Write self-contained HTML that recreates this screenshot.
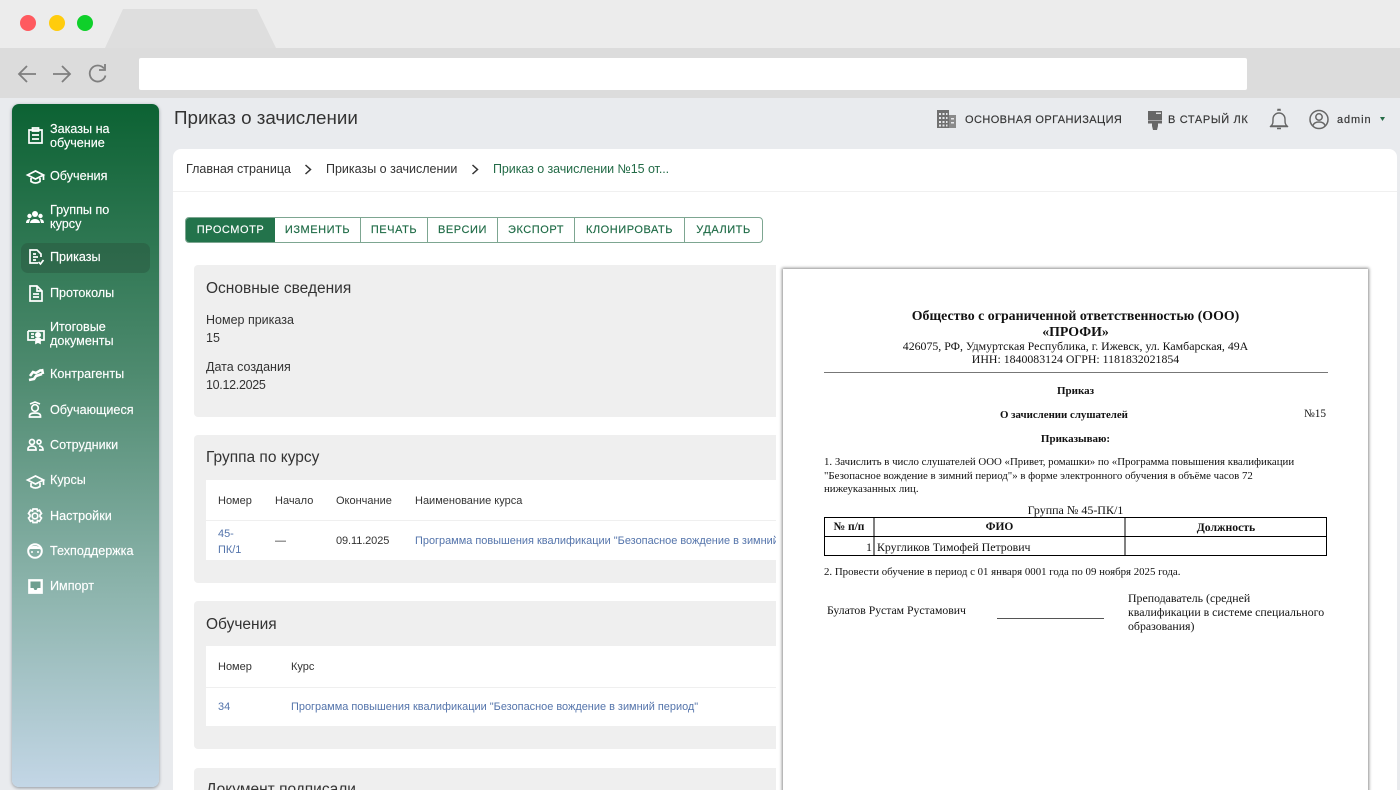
<!DOCTYPE html>
<html lang="ru"><head><meta charset="utf-8"><title>Приказ о зачислении</title>
<style>
html,body{margin:0;padding:0;width:1400px;height:790px;overflow:hidden}
body{position:relative;background:#e9ebee;font-family:"Liberation Sans",sans-serif;color:#2b2b2b}
#root{position:absolute;left:0;top:0;width:1400px;height:790px;overflow:hidden;background:#e9ebee}
.a{position:absolute;white-space:nowrap}
.bar{position:absolute;left:0;top:0;width:1400px;height:48px;background:#ececec}
.bar2{position:absolute;left:0;top:48px;width:1400px;height:50px;background:#dcdcdc}
.side{position:absolute;left:12px;top:104px;width:147px;height:683px;border-radius:7px;background:linear-gradient(180deg,#0c6233 0%,#4f8b70 40%,#8eb5ae 72%,#c3d6e6 100%);box-shadow:0 1px 3px rgba(70,80,90,.55)}
.m{position:absolute;left:50px;color:#fff;font-size:12.6px;line-height:14px;white-space:nowrap;-webkit-text-stroke:.15px #fff}
.main{position:absolute;left:173px;top:149px;width:1224px;height:641px;background:#fff;border-radius:8px 8px 0 0}
.card{position:absolute;left:194px;width:590px;background:#efefef;border-radius:4px}
.h{font-size:15.5px;color:#333}
.t{font-size:11px;color:#333}
.l{font-size:10.95px;color:#5474ab}
.btns{position:absolute;left:185px;top:217px;width:578px;height:26px;display:flex;border:1px solid #7da691;border-radius:4px;overflow:hidden;background:#fff;box-sizing:border-box}
.btns div{box-sizing:border-box;height:24px;line-height:24px;text-align:center;font-size:11px;letter-spacing:.55px;color:#1d6a45;border-right:1px solid #7da691;-webkit-text-stroke:.15px #1d6a45}
.btns div:last-child{border:0}
.btns .on{background:#23734b;color:#fff;border:0;-webkit-text-stroke:.15px #fff}
.doc{font-family:"Liberation Serif",serif;color:#111}
.dc{position:absolute;left:783px;width:585px;text-align:center;white-space:nowrap;font-family:"Liberation Serif",serif;color:#111}
svg{position:absolute;overflow:visible}
</style></head><body><div id="root">
<div class="bar"></div><div class="bar2"></div>
<div class="a" style="left:20px;top:15px;width:16px;height:16px;border-radius:50%;background:#ff5a5f"></div>
<div class="a" style="left:49px;top:15px;width:16px;height:16px;border-radius:50%;background:#ffcc0d"></div>
<div class="a" style="left:77px;top:15px;width:16px;height:16px;border-radius:50%;background:#0fd02a"></div>
<svg style="left:0;top:0" width="300" height="48"><path d="M105 48L123 9H257L276 48Z" fill="#dedede"/></svg>
<svg style="left:0;top:60px" width="120" height="28" fill="none" stroke="#7f7f7f" stroke-width="1.8"><path d="M36 14H20M27 6l-8 8 8 8M53 14h16M62 6l8 8-8 8"/><path d="M104 8.5a8 8 0 1 0 1.5 7"/><path d="M105 4v6h-6" /></svg>
<div class="a" style="left:139px;top:58px;width:1108px;height:32px;background:#fff;border-radius:2px"></div>

<div class="side"></div>
<div class="a" style="left:21px;top:243px;width:129px;height:30px;background:rgba(40,80,60,.42);border-radius:7px"></div>
<div class="m" style="top:122px">Заказы на<br>обучение</div>
<div class="m" style="top:169px">Обучения</div>
<div class="m" style="top:203px">Группы по<br>курсу</div>
<div class="m" style="top:250px">Приказы</div>
<div class="m" style="top:286px">Протоколы</div>
<div class="m" style="top:320px">Итоговые<br>документы</div>
<div class="m" style="top:367px">Контрагенты</div>
<div class="m" style="top:403px">Обучающиеся</div>
<div class="m" style="top:438px">Сотрудники</div>
<div class="m" style="top:473px">Курсы</div>
<div class="m" style="top:509px">Настройки</div>
<div class="m" style="top:544px">Техподдержка</div>
<div class="m" style="top:579px">Импорт</div>

<svg style="left:0;top:0" width="50" height="600" fill="none" stroke="#fff" stroke-width="1.7">
<path d="M29 130h13v13H29zM32.500 128h6v3h-6zM32 135h7M32 139h7"/>
<path d="M27.500 175l8-4 8 4-8 4zM31 178v3.500c3 2 6 2 9 0V178M43.500 175v5"/>
<g fill="#fff" stroke="none"><circle cx="35" cy="214" r="3"/><circle cx="29.500" cy="216" r="2.200"/><circle cx="40.500" cy="216" r="2.200"/><path d="M30 223a5 4 0 0 1 10 0zM26 223c0-3 2-4 4-4l-1 4zM44 223c0-3-2-4-4-4l1 4z"/></g>
<path d="M38 263H30v-13h7l4 4v3M33 254h3M33 257h5M33 260h3M38.500 262l2 2 3-4"/>
<path d="M30 286h7l5 5v10H30zM37 286v5h5M33 294h6M33 297h6"/>
<path d="M28 331h16v9h-4M28 331v9h7M31 334h3M31 337h3"/><path d="M40 338l0 5-2-1-2 1v-5" fill="#fff"/><circle cx="38" cy="335" r="3" fill="#fff" stroke="none"/>
<path d="M29 380l5-1 2-3 6-2M30 376l3-4 3 1 5-3M42 369l1 5" stroke-width="2.600"/>
<circle cx="35" cy="408" r="3.300"/><path d="M29.500 417v-1c0-2 2-3 5.500-3s5.500 1 5.500 3v1zM30 404l5-2 5 2"/>
<circle cx="32" cy="442" r="2.500"/><circle cx="39" cy="442" r="2"/><path d="M28 450v-1c0-2 2-3 4-3s4 1 4 3v1zM39 446c2 0 4 1 4 4h-4"/>
<path d="M27.500 480l8-4 8 4-8 4zM31 483v3.500c3 2 6 2 9 0V483M43.500 480v5"/>
<circle cx="35" cy="516" r="2.800"/><path d="M33 509h4l.5 2 2-.8 2 3.300-1.500 1.500v1.500l1.500 1.500-2 3.300-2-.8-.5 2h-4l-.5-2-2 .8-2-3.300 1.500-1.500v-1.500l-1.500-1.500 2-3.300 2 .8z"/>
<circle cx="35" cy="551" r="6.800" stroke-width="2"/><path d="M29 549c3-3 8-3 12 0" fill="#fff"/><circle cx="32" cy="552" r="1" fill="#fff" stroke="none"/><circle cx="38" cy="552" r="1" fill="#fff" stroke="none"/>
<path d="M29 580h13v13H29z" fill="#fff" stroke="#fff"/><path d="M30.500 581.500h10v6.500h-3l-1 2h-2l-1-2h-3z" fill="#6f9f90" stroke="none"/>
</svg>

<div class="a" style="left:174px;top:107px;font-size:18.8px;color:#333">Приказ о зачислении</div>
<svg style="left:936px;top:109px" width="22" height="20" fill="#707070"><path d="M1 1h12v18H1z"/><path d="M13 6h7v13h-7z" fill="#8a8a8a"/><path d="M3 4h2v2H3zM6.500 4h2v2h-2zM10 4h1.500v2H10zM3 8h2v2H3zM6.500 8h2v2h-2zM10 8h1.500v2H10zM3 12h2v2H3zM6.500 12h2v2h-2zM10 12h1.500v2H10zM3 15.500h2v2H3zM6.500 15.500h2v2h-2zM10 15.500h1.500v2H10zM15 9h3v1.500h-3zM15 13h3v1.500h-3z" fill="#e6e7ea"/></svg>
<div class="a t" style="left:965px;top:114px;letter-spacing:.42px;-webkit-text-stroke:.15px #333">ОСНОВНАЯ ОРГАНИЗАЦИЯ</div>
<svg style="left:1147px;top:110px" width="16" height="20" fill="#666"><path d="M1 1h14v9H1z"/><path d="M1 10.500h14v3H1zM5 13.500h6v2.500l-1 4H6l-1-4z"/><path d="M9 2.500h5v1.500H9z" fill="#ddd"/></svg>
<div class="a t" style="left:1168px;top:114px;letter-spacing:.65px;-webkit-text-stroke:.15px #333">В СТАРЫЙ ЛК</div>
<svg style="left:1269px;top:109px" width="20" height="22" fill="none" stroke="#666" stroke-width="1.400"><path d="M2 17c2-2 2-3 2-7a6 6 0 0 1 12 0c0 4 0 5 2 7zM1 17.500h18"/><path d="M9 2V0.500h2V2M8 19.500h4" /></svg>
<svg style="left:1309px;top:109px" width="21" height="21" fill="none" stroke="#666" stroke-width="1.500"><circle cx="10" cy="10.500" r="9"/><circle cx="10" cy="8" r="3.200"/><path d="M4 16.500c1-3 3.500-3.500 6-3.500s5 .5 6 3.500"/></svg>
<div class="a t" style="left:1337px;top:114px;letter-spacing:.9px;-webkit-text-stroke:.15px #333">admin</div>
<svg style="left:1380px;top:117px" width="6" height="5"><path d="M0 0h5L2.500 4z" fill="#246b45"/></svg>

<div class="main"></div>
<div class="a" style="left:173px;top:191px;width:1224px;height:1px;background:#f0f0f0"></div>
<div class="a t" style="left:186px;top:162px;font-size:12.5px">Главная страница</div>
<svg style="left:304px;top:164px" width="8" height="11" fill="none" stroke="#333" stroke-width="1.500"><path d="M1.500 1l5 4.500-5 4.500"/></svg>
<div class="a t" style="left:326px;top:162px;font-size:12.5px">Приказы о зачислении</div>
<svg style="left:471px;top:164px" width="8" height="11" fill="none" stroke="#333" stroke-width="1.500"><path d="M1.500 1l5 4.500-5 4.500"/></svg>
<div class="a t" style="left:493px;top:162px;font-size:12.5px;color:#236b47;letter-spacing:-.07px">Приказ о зачислении №15 от...</div>

<div class="btns"><div class="on" style="width:89px">ПРОСМОТР</div><div style="width:86px">ИЗМЕНИТЬ</div><div style="width:67px">ПЕЧАТЬ</div><div style="width:70px">ВЕРСИИ</div><div style="width:77px">ЭКСПОРТ</div><div style="width:110px">КЛОНИРОВАТЬ</div><div style="width:77px">УДАЛИТЬ</div></div>

<div class="card" style="top:265px;height:152px"></div>
<div class="a h" style="left:206px;top:280px">Основные сведения</div>
<div class="a t" style="left:206px;top:313px;font-size:12.5px">Номер приказа</div>
<div class="a t" style="left:206px;top:331px;font-size:12.5px">15</div>
<div class="a t" style="left:206px;top:360px;font-size:12.5px">Дата создания</div>
<div class="a t" style="left:206px;top:378px;font-size:12.5px;letter-spacing:-.3px">10.12.2025</div>

<div class="card" style="top:435px;height:148px"></div>
<div class="a h" style="left:206px;top:449px">Группа по курсу</div>
<div class="a" style="left:206px;top:480px;width:578px;height:40px;background:#fff"></div>
<div class="a" style="left:206px;top:521px;width:578px;height:39px;background:#fff"></div>
<div class="a t" style="left:218px;top:495px">Номер</div><div class="a t" style="left:275px;top:495px">Начало</div><div class="a t" style="left:336px;top:495px">Окончание</div><div class="a t" style="left:415px;top:495px">Наименование курса</div>
<div class="a l" style="left:218px;top:526px;line-height:16px">45-<br>ПК/1</div>
<div class="a t" style="left:275px;top:535px">—</div><div class="a t" style="left:336px;top:535px;letter-spacing:-.1px">09.11.2025</div>
<div class="a l" style="left:415px;top:535px">Программа повышения квалификации "Безопасное вождение в зимний</div>

<div class="card" style="top:601px;height:148px"></div>
<div class="a h" style="left:206px;top:616px">Обучения</div>
<div class="a" style="left:206px;top:646px;width:578px;height:41px;background:#fff"></div>
<div class="a" style="left:206px;top:688px;width:578px;height:38px;background:#fff"></div>
<div class="a t" style="left:218px;top:661px">Номер</div><div class="a t" style="left:291px;top:661px">Курс</div>
<div class="a l" style="left:218px;top:701px">34</div>
<div class="a l" style="left:291px;top:701px">Программа повышения квалификации "Безопасное вождение в зимний период"</div>

<div class="card" style="top:768px;height:30px"></div>
<div class="a h" style="left:206px;top:781px">Документ подписали</div>

<div class="a" style="left:776px;top:261px;width:598px;height:529px;background:#fff"></div>
<div class="a" style="left:783px;top:269px;width:585px;height:530px;background:#fff;box-shadow:0 0 3px 1px #8f8f8f"></div>
<div class="dc" style="top:308px;font-size:13.85px;font-weight:bold">Общество с ограниченной ответственностью (ООО)</div>
<div class="dc" style="top:324px;font-size:13.85px;font-weight:bold">«ПРОФИ»</div>
<div class="dc" style="top:339px;font-size:11.85px">426075, РФ, Удмуртская Республика, г. Ижевск, ул. Камбарская, 49А</div>
<div class="dc" style="top:352px;font-size:11.85px">ИНН: 1840083124 ОГРН: 1181832021854</div>
<div class="a" style="left:824px;top:372px;width:504px;height:1px;background:#777"></div>
<div class="dc" style="top:385px;font-size:11px;font-weight:bold">Приказ</div>
<div class="a doc" style="left:1000px;top:409px;font-size:10.85px;font-weight:bold">О зачислении слушателей</div>
<div class="a doc" style="left:1304px;top:408px;font-size:11.3px">№15</div>
<div class="dc" style="top:433px;font-size:11px;font-weight:bold">Приказываю:</div>
<div class="a doc" style="left:824px;top:456px;font-size:10.84px;line-height:13.5px">1. Зачислить в число слушателей ООО «Привет, ромашки» по «Программа повышения квалификации<br>"Безопасное вождение в зимний период"» в форме электронного обучения в объёме часов 72<br>нижеуказанных лиц.</div>
<div class="dc" style="top:503px;font-size:12px">Группа № 45-ПК/1</div>
<svg style="left:824px;top:517px" width="504" height="40" fill="none" stroke="#000" stroke-width="1"><path d="M.5.5h502v38H.5zM.5 19.500h502M50 .5v38M301 .5v38"/></svg>
<div class="a doc" style="left:824px;top:521px;width:50px;text-align:center;font-size:11.5px;font-weight:bold">№ п/п</div>
<div class="a doc" style="left:874px;top:521px;width:251px;text-align:center;font-size:11.5px;font-weight:bold">ФИО</div>
<div class="a doc" style="left:1125px;top:521px;width:202px;text-align:center;font-size:11.7px;font-weight:bold">Должность</div>
<div class="a doc" style="left:866px;top:540px;font-size:12px">1</div>
<div class="a doc" style="left:877px;top:540px;font-size:11.85px">Кругликов Тимофей Петрович</div>
<div class="a doc" style="left:824px;top:566px;font-size:10.85px">2. Провести обучение в период с 01 января 0001 года по 09 ноября 2025 года.</div>
<div class="a doc" style="left:827px;top:604px;font-size:11.7px">Булатов Рустам Рустамович</div>
<div class="a" style="left:997px;top:618px;width:107px;height:1px;background:#555"></div>
<div class="a doc" style="left:1128px;top:591px;font-size:11.85px;line-height:14px">Преподаватель (средней<br>квалификации в системе специального<br>образования)</div>
</div></body></html>
